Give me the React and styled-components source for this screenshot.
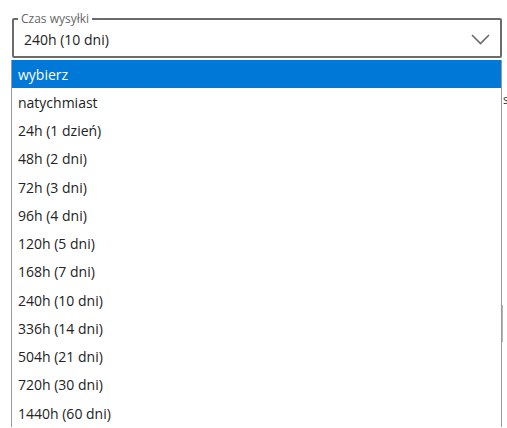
import React from 'react'
import styled, { createGlobalStyle } from 'styled-components'

const GlobalStyle = createGlobalStyle`
    html, body {
        margin: 0;
        padding: 0;
        background: #fff;
    }
    body {
        font-family: "Open Sans", "Liberation Sans", sans-serif;
    }
`

const Page = styled.div`
    position: relative;
    width: 507px;
    height: 428px;
    overflow: hidden;
    padding-top: 12px;
    box-sizing: border-box;
`

const Field = styled.fieldset`
    margin: 0 0 0 12px;
    width: 490px;
    box-sizing: border-box;
    border: 2px solid #6b6b6b;
    border-radius: 2px;
    padding: 0 10px 0 4px;
    height: 46px;
    display: flex;
    align-items: center;
    justify-content: space-between;
`

const Legend = styled.legend`
    font-size: 12px;
    line-height: 14px;
    color: #666;
    padding: 0 3px;
`

const Value = styled.span`
    margin-left: 6px;
    margin-top: -3px;
    font-size: 14px;
    color: #222;
`

const Chevron = styled.svg`
    width: 19px;
    height: 11px;
    margin-top: -3px;
`

const Behind = styled.div`
    display: flex;
    flex-direction: column;
`

const Hint = styled.span`
    margin: 33px 0 0 503px;
    font-size: 12px;
    color: #333;
    white-space: nowrap;
`

const EdgeBox = styled.div`
    margin-top: 197px;
    width: 503px;
    height: 37px;
    box-sizing: border-box;
    border-right: 2px solid #b4b4b4;
`

const List = styled.ul`
    position: absolute;
    top: 60px;
    left: 11px;
    width: 491px;
    margin: 0;
    padding: 0;
    list-style: none;
    box-sizing: border-box;
    border-left: 1px solid #9a9a9a;
    border-right: 1px solid #9a9a9a;
    background: #fff;
`

const Option = styled.li`
    height: 28.25px;
    display: flex;
    align-items: center;
    padding-left: 6px;
    font-size: 14px;
    color: ${p => (p.$active ? '#fff' : '#222')};
    background: ${p => (p.$active ? '#0078d7' : 'transparent')};
`

const options = [
    'wybierz',
    'natychmiast',
    '24h (1 dzień)',
    '48h (2 dni)',
    '72h (3 dni)',
    '96h (4 dni)',
    '120h (5 dni)',
    '168h (7 dni)',
    '240h (10 dni)',
    '336h (14 dni)',
    '504h (21 dni)',
    '720h (30 dni)',
    '1440h (60 dni)',
]

function App () {
    return (
        <Page>
            <GlobalStyle />
            <Field>
                <Legend>Czas wysyłki</Legend>
                <Value>240h (10 dni)</Value>
                <Chevron viewBox="0 0 19 11">
                    <polyline points="1,1 9.5,9.5 18,1" fill="none" stroke="#6b6b6b" strokeWidth="1.6" />
                </Chevron>
            </Field>
            <Behind>
                <Hint>s</Hint>
                <EdgeBox />
            </Behind>
            <List>
                {options.map((o, i) => (
                    <Option key={o} $active={i === 0}>{o}</Option>
                ))}
            </List>
        </Page>
    )
}

export default App
